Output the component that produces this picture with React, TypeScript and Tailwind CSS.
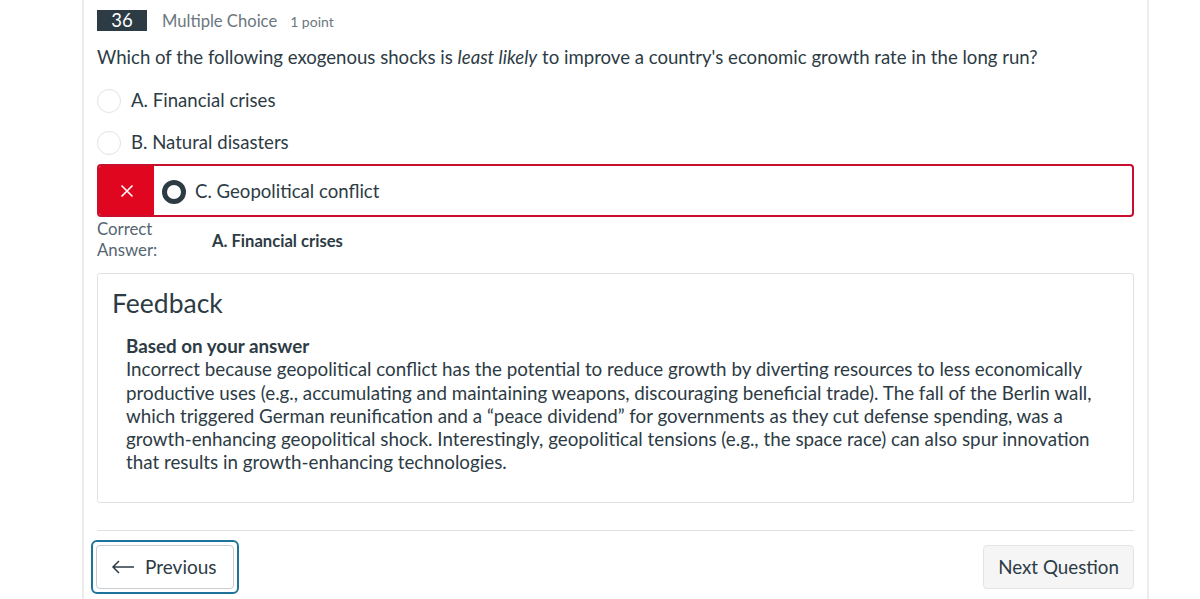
import React from "react";

export default function App() {
  return (
    <div className="w-[1200px] h-[599px] bg-white overflow-hidden text-[#2d3b45]" style={{ fontFamily: "Lato, 'Noto Sans', sans-serif" }}>
      <div className="ml-[82px] w-[1067px] h-[599px] border-l-2 border-r-2 border-[#ececec] pl-[13px] pr-[13px]">
        <div className="flex items-center pt-[10px] h-[31px]">
          <div className="w-[50px] h-[21px] bg-[#2d3b45] text-white text-[18.5px] leading-[21px] text-center">36</div>
          <span className="ml-[15px] text-[16.6px] text-[#6b7780] mt-[1px]">Multiple Choice</span>
          <span className="ml-[13px] text-[14px] text-[#6b7780] mt-[2px]">1 point</span>
        </div>
        <div className="mt-[14px] text-[18.6px] leading-[24px]">
          Which of the following exogenous shocks is <em>least likely</em> to improve a country's economic growth rate in the long run?
        </div>
        <div className="mt-[20px] flex items-center h-[24px]">
          <div className="w-[24px] h-[24px] rounded-full border border-[#e3e3e3] bg-white"></div>
          <span className="ml-[10px] text-[18.6px]">A. Financial crises</span>
        </div>
        <div className="mt-[18px] flex items-center h-[24px]">
          <div className="w-[24px] h-[24px] rounded-full border border-[#e3e3e3] bg-white"></div>
          <span className="ml-[10px] text-[18.6px]">B. Natural disasters</span>
        </div>
        <div className="mt-[9px] flex h-[53px] rounded-[4px] border-2 border-[#c8102e] overflow-hidden">
          <div className="w-[55px] bg-[#e0061f] flex items-center justify-center">
            <svg width="14" height="14" viewBox="0 0 14 14">
              <path d="M1.5 1.5 L12.5 12.5 M12.5 1.5 L1.5 12.5" stroke="white" strokeWidth="1.6" />
            </svg>
          </div>
          <div className="flex items-center pl-[8px] pt-[2px]">
            <div className="w-[24px] h-[24px] rounded-full border-[5px] border-[#2d3b45] bg-white"></div>
            <span className="ml-[9px] text-[18.6px]">C. Geopolitical conflict</span>
          </div>
        </div>
        <div className="flex mt-[1px]">
          <div className="w-[115px] text-[16.8px] leading-[21px] text-[#556572]">Correct<br />Answer:</div>
          <div className="mt-[11px] text-[16.6px] font-bold">A. Financial crises</div>
        </div>
        <div className="mt-[13px] h-[230px] border border-[#dfe2e5] rounded-[3px] pl-[14px] pt-[13px]">
          <div className="text-[26.5px] leading-[32px]">Feedback</div>
          <div className="mt-[15px] pl-[14px] pr-[22px] text-[18.8px] leading-[23.3px]">
            <div className="font-bold">Based on your answer</div>
            <div>
              Incorrect because geopolitical conflict has the potential to reduce growth by diverting resources to less economically productive uses (e.g., accumulating and maintaining weapons, discouraging beneficial trade). The fall of the Berlin wall, which triggered German reunification and a “peace dividend” for governments as they cut defense spending, was a growth-enhancing geopolitical shock. Interestingly, geopolitical tensions (e.g., the space race) can also spur innovation that results in growth-enhancing technologies.
            </div>
          </div>
        </div>
        <div className="mt-[27px] border-t border-[#dfe2e5]"></div>
        <div className="mt-[9px] flex items-center justify-between">
          <div className="ml-[-6px] p-[3px] rounded-[6px] border-2 border-[#1d7399]">
            <button className="h-[44px] pl-[14px] pr-[16px] flex items-center bg-white border border-[#c7cdd1] rounded-[4px] text-[19px] text-[#2d3b45]">
              <svg width="24" height="14" viewBox="0 0 24 14" className="mr-[10px]">
                <path d="M23 7 H2 M8 1 L2 7 L8 13" stroke="#2d3b45" strokeWidth="1.5" fill="none" />
              </svg>
              Previous
            </button>
          </div>
          <button className="h-[44px] px-[14px] bg-[#f5f5f5] border border-[#e2e5e7] rounded-[4px] text-[18.8px] text-[#2d3b45]">
            Next Question
          </button>
        </div>
      </div>
    </div>
  );
}
